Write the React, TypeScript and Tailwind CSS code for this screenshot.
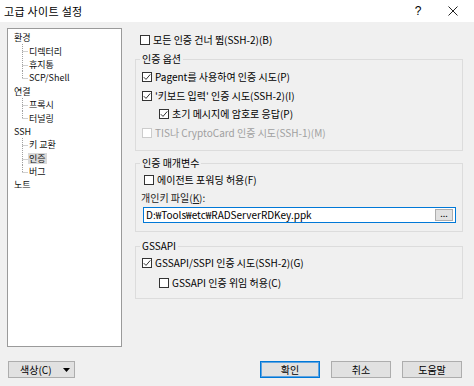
import React from "react";

type Node = { t: string; lvl: 0 | 1; last?: boolean; sel?: boolean };

const tree: Node[] = [
  { t: "환경", lvl: 0 },
  { t: "디렉터리", lvl: 1 },
  { t: "휴지통", lvl: 1 },
  { t: "SCP/Shell", lvl: 1, last: true },
  { t: "연결", lvl: 0 },
  { t: "프록시", lvl: 1 },
  { t: "터널링", lvl: 1, last: true },
  { t: "SSH", lvl: 0 },
  { t: "키 교환", lvl: 1 },
  { t: "인증", lvl: 1, sel: true },
  { t: "버그", lvl: 1, last: true },
  { t: "노트", lvl: 0 },
];

function Check({ checked, disabled }: { checked?: boolean; disabled?: boolean }) {
  return (
    <span
      className={
        "w-[10px] h-[10px] shrink-0 border bg-white flex items-center justify-center " +
        (disabled ? "border-[#cccccc]" : "border-[#333333]")
      }
    >
      {checked && (
        <svg width="8" height="8" viewBox="0 0 8 8">
          <path d="M0.8 4.2 L3 6.4 L7.3 1.4" fill="none" stroke="#333" strokeWidth="1" />
        </svg>
      )}
    </span>
  );
}

function CheckRow({
  label,
  checked,
  disabled,
  indent,
}: {
  label: React.ReactNode;
  checked?: boolean;
  disabled?: boolean;
  indent?: boolean;
}) {
  return (
    <div
      className={
        "h-[14px] flex items-center gap-[3px] " +
        (indent ? "pl-[23px] " : "pl-[6px] ") +
        (disabled ? "text-[#a0a0a0]" : "text-black")
      }
    >
      <Check checked={checked} disabled={disabled} />
      <span className="whitespace-nowrap">{label}</span>
    </div>
  );
}

function Btn({ children, def }: { children: React.ReactNode; def?: boolean }) {
  return (
    <div
      className={
        "w-[60px] h-[17px] flex items-center justify-center bg-[#e1e1e1] border whitespace-nowrap " +
        (def
          ? "border-[#0078d7] shadow-[inset_0_0_0_1px_#5fa3e0]"
          : "border-[#adadad]")
      }
    >
      {children}
    </div>
  );
}

export default function App() {
  return (
    <div className="w-[474px] h-[386px] bg-[#f0f0f0] flex flex-col text-[10px] leading-[14px] text-black font-['Noto_Sans_CJK_KR','Noto_Sans',sans-serif] overflow-hidden">
      {/* Title bar */}
      <div className="h-[22px] bg-white flex items-center shrink-0">
        <span className="pl-[4px] text-[11px] tracking-[0.3px]">고급 사이트 설정</span>
        <div className="ml-auto flex items-center">
          <span className="w-[12px] text-center text-[12px] font-['Liberation_Sans',sans-serif]">?</span>
          <span className="w-[24px]" />
          <svg width="10" height="10" viewBox="0 0 10 10" className="mr-[16px]">
            <path d="M0.5 0.5 L9.5 9.5 M9.5 0.5 L0.5 9.5" stroke="#222" strokeWidth="1" />
          </svg>
        </div>
      </div>

      {/* Body */}
      <div className="flex px-[7px] pt-[6px] gap-[13px]">
        {/* Tree */}
        <div className="w-[115px] h-[319px] bg-white border border-[#9a9a9a] pt-[2px] shrink-0 text-[9px] leading-[11px] text-[#111]">
          {tree.map((n, i) =>
            n.lvl === 0 ? (
              <div key={i} className="h-[13.4px] flex items-center pl-[6px] whitespace-nowrap">
                <span className="leading-[11px]">{n.t}</span>
              </div>
            ) : (
              <div key={i} className="h-[13.4px] flex items-center pl-[13px] whitespace-nowrap">
                <svg width="7" height="13.4" viewBox="0 0 7 13.4" className="shrink-0">
                  <line
                    x1="1.5"
                    y1="0"
                    x2="1.5"
                    y2={n.last ? 7 : 13.4}
                    stroke="#a0a0a0"
                    strokeWidth="1"
                    strokeDasharray="1 1"
                  />
                  <line x1="1.5" y1="7.5" x2="7" y2="7.5" stroke="#a0a0a0" strokeWidth="1" strokeDasharray="1 1" />
                </svg>
                <span className={"px-[1px] leading-[11px] " + (n.sel ? "bg-[#d9d9d9]" : "")}>{n.t}</span>
              </div>
            )
          )}
        </div>

        {/* Right column */}
        <div className="w-[328px] flex flex-col pt-[5px]">
          <div className="-ml-[1px]">
            <CheckRow label="모든 인증 건너 뜀(SSH-2)(B)" />
          </div>

          <fieldset className="mt-[5px] border border-[#dcdcdc] pb-[10px]">
            <legend className="ml-[4px] px-[2px] leading-[14px]">인증 옵션</legend>
            <div className="mt-[4px] flex flex-col gap-[4.7px]">
              <CheckRow label="Pagent를 사용하여 인증 시도(P)" checked />
              <CheckRow label="'키보드 입력' 인증 시도(SSH-2)(I)" checked />
              <CheckRow label="초기 메시지에 암호로 응답(P)" checked indent />
              <CheckRow label="TIS나 CryptoCard 인증 시도(SSH-1)(M)" disabled />
            </div>
          </fieldset>

          <fieldset className="mt-[5px] border border-[#dcdcdc] pb-[8px]">
            <legend className="ml-[4px] px-[2px] leading-[14px]">인증 매개변수</legend>
            <div className="mt-[3px] pl-[2px]">
              <CheckRow label="에이전트 포워딩 허용(F)" />
            </div>
            <div className="mt-[4px] h-[14px] flex items-center pl-[5px] text-[#222]">
              개인키 파일(<span className="underline">K</span>):
            </div>
            <div className="mt-[2px] ml-[7px] w-[313px] h-[16px] bg-white border border-[#0078d7] flex items-center pl-[2px] pr-[2px]">
              <span className="whitespace-nowrap">D:₩Tools₩etc₩RADServerRDKey.ppk</span>
              <div className="ml-auto w-[18px] h-[12px] bg-[#e1e1e1] border border-[#adadad] flex items-center justify-center text-[9px] leading-[8px] pb-[2px]">
                ...
              </div>
            </div>
          </fieldset>

          <fieldset className="mt-[7px] border border-[#dcdcdc] pb-[8px]">
            <legend className="ml-[4px] px-[2px] leading-[14px]">GSSAPI</legend>
            <div className="mt-[3px]">
              <CheckRow label="GSSAPI/SSPI 인증 시도(SSH-2)(G)" checked />
            </div>
            <div className="mt-[6px]">
              <CheckRow label="GSSAPI 인증 위임 허용(C)" indent />
            </div>
          </fieldset>
        </div>
      </div>

      {/* Footer */}
      <div className="flex items-center mt-[14px] px-[8px] pr-[12px]">
        <div className="w-[67px] h-[17px] bg-[#e1e1e1] border border-[#adadad] flex items-center pl-[11px] whitespace-nowrap">
          <span className="whitespace-nowrap">색상(C)</span>
          <svg width="7" height="4" viewBox="0 0 7 4" className="ml-auto mr-[4px] shrink-0">
            <path d="M0 0 L7 0 L3.5 4 Z" fill="#000" />
          </svg>
        </div>
        <div className="ml-auto flex gap-[11px]">
          <Btn def>확인</Btn>
          <Btn>취소</Btn>
          <Btn>도움말</Btn>
        </div>
      </div>
    </div>
  );
}
